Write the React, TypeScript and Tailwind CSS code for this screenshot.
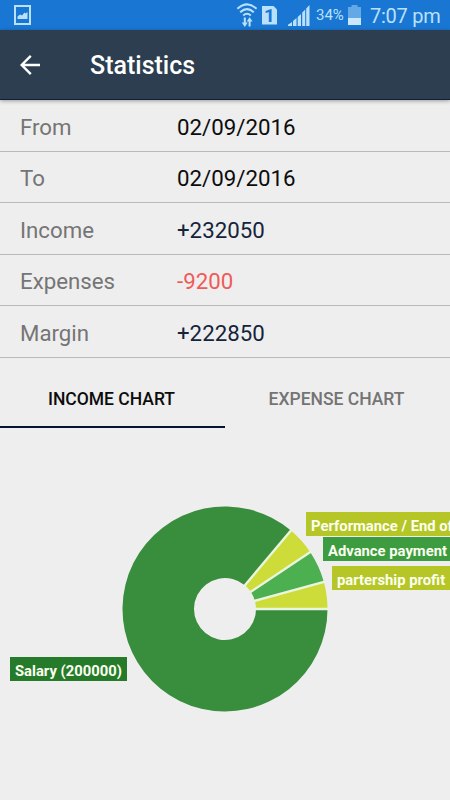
const rows = [
  { label: "From", value: "02/09/2016", color: "text-[#0c0c0c]" },
  { label: "To", value: "02/09/2016", color: "text-[#0c0c0c]" },
  { label: "Income", value: "+232050", color: "text-[#15243a]" },
  { label: "Expenses", value: "-9200", color: "text-[#f05a58]" },
  { label: "Margin", value: "+222850", color: "text-[#15243a]" },
];

// angles in degrees, counter-clockwise from the right
const slices = [
  { from: 0, to: 15.3, color: "#cddc39" },
  { from: 15.3, to: 33.7, color: "#4caf50" },
  { from: 33.7, to: 50, color: "#cddc39" },
  { from: 50, to: 360, color: "#388e3c" },
];

const labels = [
  { text: "Performance / End of", className: "left-[306px] top-[84px] bg-[#b5c626]" },
  { text: "Advance payment", className: "left-[323px] top-[109px] bg-[#3c9c3f]" },
  { text: "partership profit", className: "left-[332px] top-[138px] bg-[#b5c626]" },
  { text: "Salary (200000)", className: "left-[10px] top-[229px] bg-[#267b2a]" },
];

const CX = 225;
const CY = 181;
const OUTER = 102.5;
const INNER = 31;

function point(radius: number, angle: number) {
  const rad = (angle * Math.PI) / 180;
  return `${(CX + radius * Math.cos(rad)).toFixed(2)} ${(CY - radius * Math.sin(rad)).toFixed(2)}`;
}

function slicePath(from: number, to: number) {
  const large = to - from > 180 ? 1 : 0;
  return `M${point(OUTER, from)} A${OUTER} ${OUTER} 0 ${large} 0 ${point(OUTER, to)} L${point(INNER, to)} A${INNER} ${INNER} 0 ${large} 1 ${point(INNER, from)} Z`;
}

function StatusBar() {
  return (
    <div className="flex h-[30px] shrink-0 items-center bg-[#1976d2] pl-[14px] text-[#b9e1fb]">
      <svg width="17" height="20" viewBox="0 0 17 20" className="shrink-0">
        <rect x="1" y="1" width="15" height="18" fill="none" stroke="currentColor" strokeWidth="2" />
        <path d="M3.5 14V11.5L6 9.5L8 10.5L10.5 7.5L11.5 8.5L13.5 7V14Z" fill="currentColor" />
      </svg>
      <svg width="22" height="24" viewBox="0 0 22 24" className="ml-[205px] shrink-0" fill="none" stroke="currentColor" strokeWidth="2">
        <path d="M1.4 5.8Q11 -3 20.6 5.8M4.2 9.3Q11 3 17.8 9.3M7.2 12.4Q11 9 14.8 12.4" />
        <path d="M8.8 14.5V20M13.6 23.5V18" strokeWidth="2" />
        <path d="M5.8 19.5H11.8L8.8 24ZM10.6 18.6H16.6L13.6 14.2Z" fill="currentColor" stroke="none" />
      </svg>
      <div className="ml-[4px] flex h-[19px] w-[15px] shrink-0 items-center justify-center bg-[#b9e1fb] text-[19px] font-bold leading-none text-[#1976d2] [clip-path:polygon(0_0,11px_0,100%_4px,100%_100%,0_100%)]">
        1
      </div>
      <svg width="22" height="21" viewBox="0 0 22 21" className="ml-[11px] shrink-0" fill="currentColor">
        <path d="M0 21V19.8L4 17V21ZM5 21V16L8.5 13V21ZM9.7 21V12L13 9V21ZM14.2 21V7.5L17.2 4.5V21ZM18.2 21V3.5L21.5 0V21Z" />
      </svg>
      <span className="ml-[6px] w-[28px] whitespace-nowrap pt-px text-[15px] leading-none">34%</span>
      <svg width="13" height="20" viewBox="0 0 13 20" className="ml-[4px] shrink-0">
        <path d="M3.5 0H9.5V2H13V20H0V2H3.5Z" fill="#63a9e5" />
        <path d="M0 13H13V20H0Z" fill="#cbe7fb" />
      </svg>
      <span className="ml-[9px] whitespace-nowrap pt-px text-[20px] leading-none tracking-[-0.25px]">7:07 pm</span>
    </div>
  );
}

function Header() {
  return (
    <header className="relative z-10 flex h-[70px] shrink-0 items-center border-b border-[#0d2138] bg-[#2c3e50] pl-[20px] text-white shadow-[0_1px_4px_rgba(0,0,0,0.35)]">
      <button aria-label="Back">
        <svg width="20" height="20" viewBox="0 0 20 20" fill="none" stroke="currentColor" strokeWidth="2.4">
          <path d="M20 10H2M10.8 .9L1.7 10L10.8 19.1" />
        </svg>
      </button>
      <h1 className="ml-[50px] pt-[2px] text-[25px] font-medium leading-none">Statistics</h1>
    </header>
  );
}

function Chart() {
  return (
    <div className="relative flex-1 overflow-hidden">
      <svg width="450" height="372" viewBox="0 0 450 372">
        {slices.map((s) => (
          <path key={s.from} d={slicePath(s.from, s.to)} fill={s.color} />
        ))}
        {slices.map((s) => (
          <path key={s.from} d={`M${point(INNER - 1, s.from)} L${point(OUTER + 1, s.from)}`} stroke="#eaf5df" strokeWidth="2.4" />
        ))}
      </svg>
      {labels.map((l) => (
        <span
          key={l.text}
          className={`absolute flex h-[24px] items-center whitespace-nowrap px-[5px] pt-[5px] text-[14.8px] font-bold leading-none text-[#fbfff0] ${l.className}`}
        >
          {l.text}
        </span>
      ))}
    </div>
  );
}

export default function App() {
  return (
    <div className="flex h-[800px] w-[450px] flex-col overflow-hidden bg-[#eeeeee] font-['Roboto',sans-serif]">
      <StatusBar />
      <Header />
      <dl className="flex h-[258px] shrink-0 flex-col">
        {rows.map((r) => (
          <div key={r.label} className="flex flex-1 items-center border-b border-[#b9b9b9] pl-[20px] pt-[3px] text-[22.25px] leading-none">
            <dt className="w-[157px] text-[#757575]">{r.label}</dt>
            <dd className={r.color}>{r.value}</dd>
          </div>
        ))}
      </dl>
      <div className="flex h-[70px] shrink-0 text-[17.5px] font-medium leading-none">
        <button className="flex-1 border-b-2 border-[#06152f] pr-[2px] pt-[15px] text-[#0c0c0c]">INCOME CHART</button>
        <button className="flex-1 pr-[2px] pt-[13px] text-[#747474]">EXPENSE CHART</button>
      </div>
      <Chart />
    </div>
  );
}
